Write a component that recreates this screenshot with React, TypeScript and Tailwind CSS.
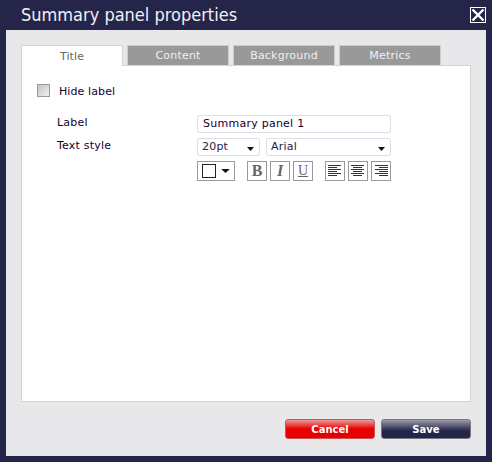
const font = "font-['DejaVu_Sans',sans-serif]";

function Tab({ label, active }: { label: string; active?: boolean }) {
  return active ? (
    <div className="relative z-10 flex h-[21px] w-[102px] items-center justify-center border border-b-0 border-[#d4d4d4] bg-white pt-[2px] text-[11px] tracking-[0.1px] text-[#666666]">
      {label}
    </div>
  ) : (
    <div className="flex h-5 w-[102px] items-center justify-center border border-b-0 border-[#cccccc] bg-[#999999] pt-[2px] text-[11px] tracking-[0.2px] text-[#f0f0f0]">
      {label}
    </div>
  );
}

function Caret({ className = "" }: { className?: string }) {
  return (
    <svg width="7" height="4" viewBox="0 0 7 4" className={className}>
      <path d="M0 0h7L3.5 4z" fill="#111" />
    </svg>
  );
}

function Select({ width, label }: { width: string; label: string }) {
  return (
    <div className={`flex h-[18px] ${width} items-center justify-between rounded-[2px] border border-[#dcdfe6] bg-white pl-1 pr-[5px] text-[11px] tracking-[0.2px] text-[#222244]`}>
      <span className="pt-px">{label}</span>
      <Caret className="mt-[3px]" />
    </div>
  );
}

function IconBox({ children }: { children: React.ReactNode }) {
  return (
    <div className="flex h-5 w-5 items-center justify-center border border-[#999999] bg-white">
      {children}
    </div>
  );
}

function Lines({ align }: { align: "left" | "center" | "right" }) {
  const rows = [13, 9, 13, 9, 13, 9];
  return (
    <svg width="14" height="12" viewBox="0 0 14 12">
      {rows.map((w, i) => {
        const x = align === "left" ? 0 : align === "right" ? 14 - w : (14 - w) / 2;
        return <rect key={i} x={Math.floor(x)} y={i * 2} width={w} height="1" fill="#333" />;
      })}
    </svg>
  );
}

export default function App() {
  return (
    <div className={`flex h-[462px] w-[492px] flex-col bg-[#25254a] px-1.5 pb-1.5 ${font}`}>
      <div className="flex h-[30px] shrink-0 items-center justify-between">
        <div className="pl-[15px] font-['DejaVu_Sans_Condensed','DejaVu_Sans',sans-serif] text-[18px] leading-none text-[#f0f0f4] [font-stretch:condensed]">Summary panel properties</div>
        <div className="flex h-4 w-4 items-center justify-center border border-white">
          <svg width="14" height="14" viewBox="0 0 14 14">
            <path d="M1.5 1.5l11 11M12.5 1.5l-11 11" stroke="#fff" strokeWidth="2.4" />
          </svg>
        </div>
      </div>
      <div className="flex min-h-0 flex-1 flex-col bg-[#e8e8ea] px-[15px] pt-[15px]">
        <div className="flex h-5 gap-1">
          <Tab label="Title" active />
          <Tab label="Content" />
          <Tab label="Background" />
          <Tab label="Metrics" />
        </div>
        <div className="h-[337px] border border-[#d4d4d4] bg-white pt-[18px]">
          <div className="flex h-[13px] items-center pl-[15px]">
            <div className="h-[13px] w-[13px] border border-[#999999] bg-[linear-gradient(135deg,#c4c4c4,#f0f0f0)]" />
            <span className="ml-[9px] pt-px text-[11px] leading-[13px] tracking-[0.1px] text-[#110033]">Hide label</span>
          </div>
          <div className="mt-[18px] flex pl-[35px]">
            <div className="w-[140px] pt-px text-[11px] tracking-[0.2px] text-[#110033]">
              <div className="flex h-[14px] items-center">Label</div>
              <div className="mt-[9px] flex h-[14px] items-center">Text style</div>
            </div>
            <div className="flex w-[194px] flex-col">
              <div className="flex h-[18px] items-center rounded-[2px] border border-[#dcdfe6] bg-white pl-[5px] pt-px text-[11px] tracking-[0.25px] text-[#110033]">
                Summary panel 1
              </div>
              <div className="mt-[5px] flex gap-[6px]">
                <Select width="w-[63px]" label="20pt" />
                <Select width="w-[125px]" label="Arial" />
              </div>
              <div className="mt-[5px] flex">
                <div className="flex h-5 w-[38px] items-center border border-[#999999] bg-white pl-[4px]">
                  <div className="h-[14px] w-[14px] border border-[#222]" />
                  <Caret className="ml-[6px] scale-x-125" />
                </div>
                <div className="ml-[12px] flex gap-[3px]">
                  <IconBox><span className="font-['Liberation_Serif',serif] text-[16px] font-bold leading-none text-[#666666]">B</span></IconBox>
                  <IconBox><span className="font-['Liberation_Serif',serif] text-[16px] font-bold italic leading-none text-[#666666]">I</span></IconBox>
                  <IconBox><span className="font-['Liberation_Serif',serif] text-[14px] leading-none text-[#666666] underline">U</span></IconBox>
                </div>
                <div className="ml-[12px] flex gap-[3px]">
                  <IconBox><Lines align="left" /></IconBox>
                  <IconBox><Lines align="center" /></IconBox>
                  <IconBox><Lines align="right" /></IconBox>
                </div>
              </div>
            </div>
          </div>
        </div>
        <div className="mt-[17px] flex justify-end gap-[6px] font-['DejaVu_Sans',sans-serif] text-[10px] font-bold text-white">
          <div className="flex h-5 w-[90px] items-center justify-center rounded-[3px] border border-[#cc5555] bg-[linear-gradient(#ee9999_0%,#e60000_50%,#e60000_100%)]">Cancel</div>
          <div className="flex h-5 w-[90px] items-center justify-center rounded-[3px] border border-[#777788] bg-[linear-gradient(#9a9aa8_0%,#25254a_60%,#25254a_100%)]">Save</div>
        </div>
      </div>
    </div>
  );
}
